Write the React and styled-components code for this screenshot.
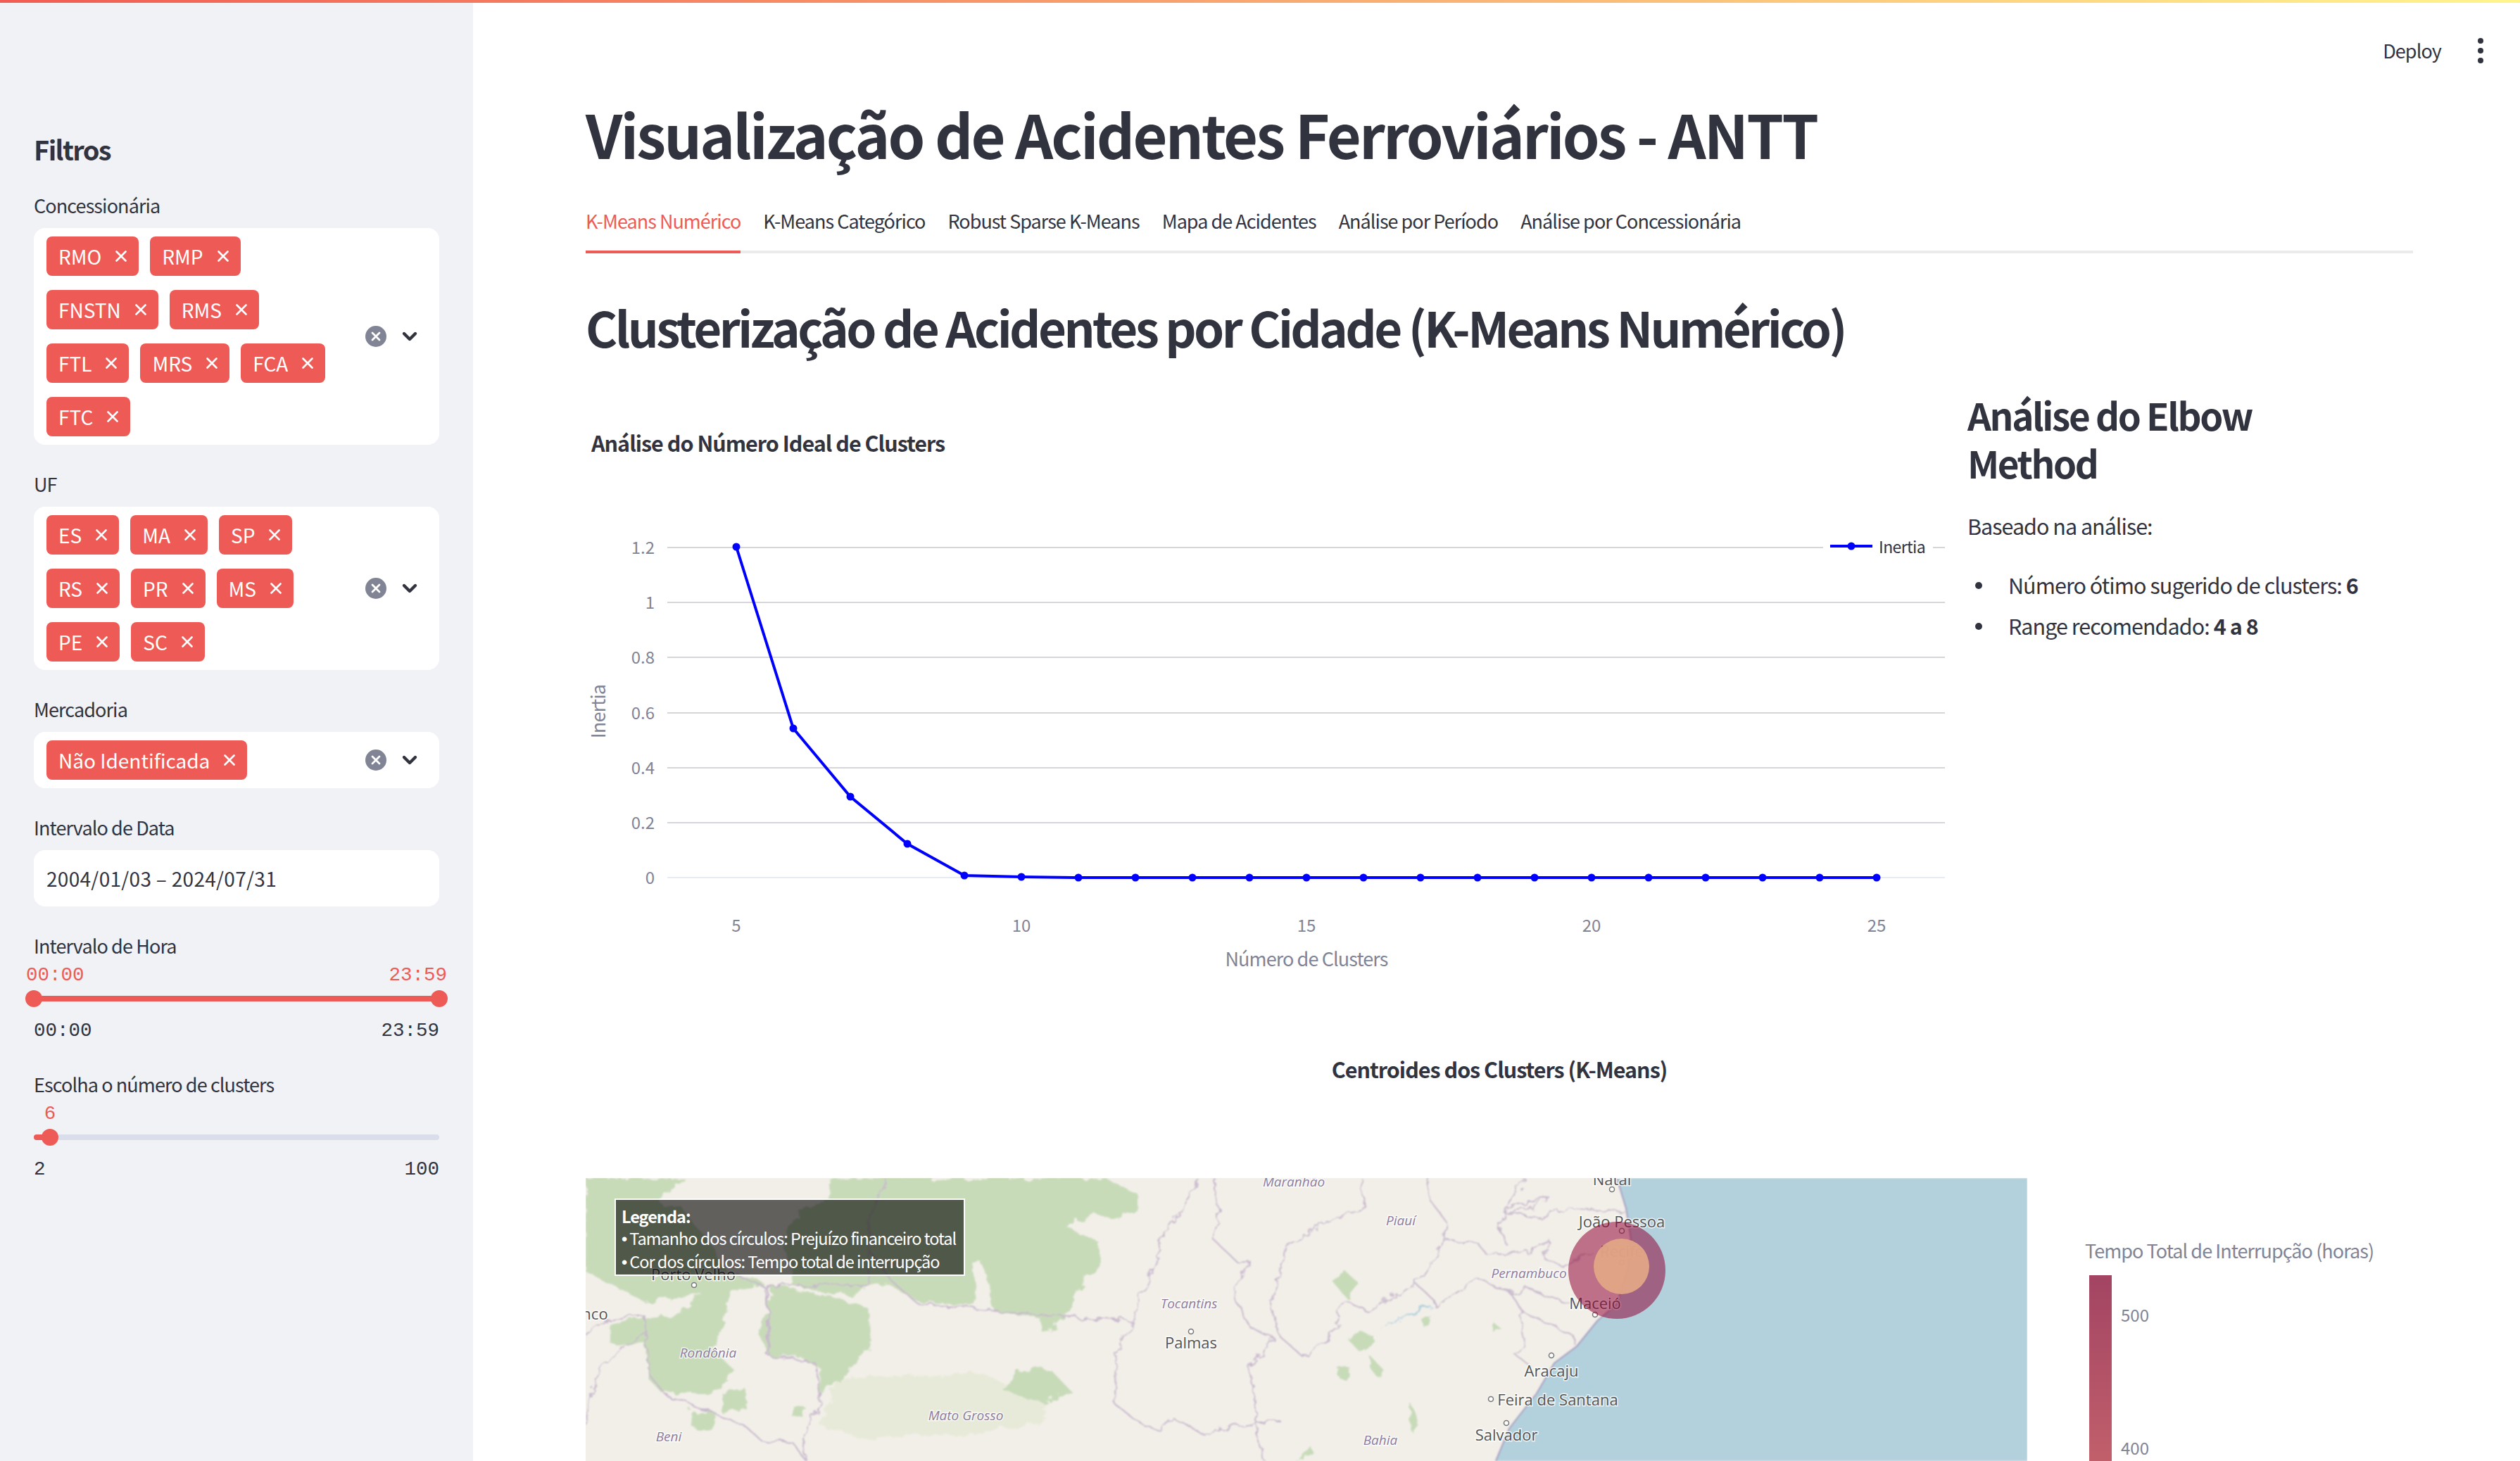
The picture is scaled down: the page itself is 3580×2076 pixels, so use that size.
import React from 'react';
import styled, { createGlobalStyle } from 'styled-components';

const SANS = '"Noto Sans CJK SC", "Noto Sans", sans-serif';
const MONO = '"Liberation Mono", monospace';
const RED = '#ee5b56';
const INK = '#31333f';
const MUTED = '#808495';

const GlobalStyle = createGlobalStyle`
  html, body { margin: 0; padding: 0; background: #fff; overflow: hidden; }
  * { box-sizing: border-box; }
  body { font-family: ${SANS}; color: ${INK}; }
`;

const Page = styled.div`
  position: relative;
  display: flex;
  width: 3580px;
  height: 2076px;
  overflow: hidden;
`;
const TopBar = styled.div`
  position: absolute;
  top: 0;
  left: 0;
  right: 0;
  height: 4px;
  background: linear-gradient(90deg, #f25c54, #fff48c);
  z-index: 3;
`;
const Toolbar = styled.div`
  position: absolute;
  top: 50px;
  right: 52px;
  display: flex;
  align-items: center;
  gap: 52px;
  font-size: 27px;
  line-height: 44px;
  letter-spacing: -0.9px;
`;
const Dots = styled.span`
  display: flex;
  flex-direction: column;
  gap: 6px;
  width: 8px;
  i { display: block; width: 8px; height: 8px; border-radius: 50%; background: ${INK}; }
`;

/* sidebar */
const Sidebar = styled.aside`
  flex: none;
  width: 672px;
  height: 100%;
  padding: 186px 48px 0;
  background: #f0f2f6;
  display: flex;
  flex-direction: column;
  gap: 32px;
`;
const SideTitle = styled.h2`
  margin: 0 0 -2px;
  font-size: 38px;
  line-height: 52px;
  font-weight: 600;
  letter-spacing: -1.6px;
`;
const Field = styled.div``;
const Label = styled.div`
  height: 56px;
  padding-bottom: 8px;
  font-size: 27px;
  line-height: 47px;
  letter-spacing: -0.9px;
`;
const SelectBox = styled.div`
  display: flex;
  align-items: center;
  width: 576px;
  padding: 12px 26px 12px 18px;
  background: #fff;
  border-radius: 16px;
`;
const Values = styled.div`
  flex: 1;
  display: flex;
  flex-wrap: wrap;
  gap: 20px 16px;
  padding-right: 33px;
`;
const Tag = styled.span`
  display: inline-flex;
  align-items: center;
  gap: 20px;
  height: 56px;
  padding: 0 17px;
  border-radius: 8px;
  background: ${RED};
  color: #fff;
  font-size: 28px;
  line-height: 52px;
`;
const Icons = styled.div`
  display: flex;
  align-items: center;
  gap: 17px;
`;
const DateBox = styled.div`
  width: 576px;
  height: 80px;
  padding: 0 18px;
  background: #fff;
  border-radius: 16px;
  font-size: 28px;
  line-height: 80px;
  letter-spacing: 0.3px;
`;
const SliderField = styled.div`
  padding-bottom: 4px;
`;
const SliderLabel = styled.div`
  height: 50px;
  font-size: 27px;
  line-height: 47px;
  letter-spacing: -0.9px;
`;
const ThumbValues = styled.div`
  display: flex;
  justify-content: space-between;
  margin: 0 -11px;
  height: 32px;
  font-family: ${MONO};
  font-size: 27.5px;
  line-height: 32px;
  color: ${RED};
`;
const SingleValue = styled.div`
  height: 32px;
  width: 46px;
  text-align: center;
  font-family: ${MONO};
  font-size: 27.5px;
  line-height: 32px;
  color: ${RED};
`;
const Rail = styled.div`
  position: relative;
  height: 8px;
  margin: 13px 0 26px;
  border-radius: 4px;
  background: #d9deea;
`;
const RailFill = styled.div`
  height: 8px;
  border-radius: 4px;
  background: ${RED};
  width: ${p => p.$to}px;
  margin-left: ${p => p.$from}px;
`;
const Thumb = styled.span`
  position: absolute;
  top: -8px;
  left: ${p => p.$at - 12}px;
  width: 24px;
  height: 24px;
  border-radius: 50%;
  background: ${RED};
`;
const TickRow = styled.div`
  display: flex;
  justify-content: space-between;
  font-family: ${MONO};
  font-size: 27.5px;
  line-height: 32px;
`;

/* main */
const Main = styled.main`
  flex: 1;
  min-width: 0;
  padding: 137px 152px 0 160px;
`;
const Title = styled.h1`
  margin: 0;
  font-size: 84.5px;
  line-height: 104px;
  font-weight: 700;
  letter-spacing: -2.85px;
  white-space: nowrap;
`;
const Tabs = styled.div`
  display: flex;
  gap: 32px;
  height: 119px;
  padding-top: 35px;
  border-bottom: 4px solid #ebebeb;
`;
const TabItem = styled.div`
  height: 80px;
  font-size: 27px;
  line-height: 76px;
  letter-spacing: -0.98px;
  color: ${p => (p.$active ? RED : INK)};
  border-bottom: ${p => (p.$active ? `4px solid ${RED}` : 'none')};
  box-sizing: content-box;
`;
const Heading = styled.h2`
  margin: 61px 0 0;
  font-size: 69px;
  line-height: 86px;
  font-weight: 600;
  letter-spacing: -3.6px;
  white-space: nowrap;
`;
const Columns = styled.div`
  display: flex;
  gap: 32px;
  margin-top: 50px;
`;
const ChartCol = styled.div`
  flex: none;
  width: 1931px;
`;
const ChartSvg = styled.svg`
  display: block;
  width: 1931px;
  height: 883px;
`;
const InfoCol = styled.div`
  flex: 1;
`;
const InfoTitle = styled.h3`
  margin: -2px 0 0;
  max-width: 520px;
  font-size: 53px;
  line-height: 68px;
  font-weight: 600;
  letter-spacing: -2.4px;
`;
const InfoText = styled.p`
  margin: 31px 0 0;
  font-size: 30.5px;
  line-height: 51px;
  letter-spacing: -1px;
`;
const InfoList = styled.ul`
  margin: 33px 0 0;
  padding: 0 0 0 58px;
  list-style: none;
  font-size: 30.5px;
  line-height: 51px;
  letter-spacing: -0.95px;
  li { position: relative; }
  li::before {
    content: '';
    position: absolute;
    left: -47px;
    top: 21px;
    width: 10px;
    height: 10px;
    border-radius: 50%;
    background: ${INK};
  }
  li + li { margin-top: 7px; }
  b { font-weight: 600; }
`;
const SectionTitle = styled.div`
  margin-top: 58px;
  text-align: center;
  font-size: 30.5px;
  line-height: 42px;
  font-weight: 700;
  letter-spacing: -1px;
`;
const MapRow = styled.div`
  display: flex;
  margin-top: 134px;
`;
const MapFrame = styled.div`
  position: relative;
  flex: none;
  width: 2048px;
  height: 402px;
  overflow: hidden;
`;
const MapSvg = styled.svg`
  display: block;
  width: 2048px;
  height: 402px;
`;
const MapLegend = styled.div`
  position: absolute;
  top: 29px;
  left: 41px;
  width: 498px;
  height: 110px;
  padding: 8px 0 0 8px;
  border: 2px solid #fff;
  background: rgba(0, 0, 0, 0.6);
  color: #fff;
  font-size: 23.5px;
  line-height: 31px;
  letter-spacing: -1px;
  white-space: nowrap;
  b { font-weight: 700; }
`;
const LegendDot = styled.span`
  font-family: "Liberation Sans", sans-serif;
  letter-spacing: 0;
  margin-right: 3px;
`;
const ColorScale = styled.div`
  padding: 83px 0 0 82px;
`;
const ScaleTitle = styled.div`
  font-size: 27px;
  line-height: 40px;
  letter-spacing: -0.95px;
  color: ${MUTED};
  white-space: nowrap;
`;
const ScaleBody = styled.div`
  display: flex;
  gap: 13px;
  margin: 15px 0 0 6px;
`;
const ScaleBar = styled.div`
  width: 32px;
  height: 300px;
  background: linear-gradient(#a34463, #c15f6b 264px);
`;
const ScaleTicks = styled.div`
  display: flex;
  flex-direction: column;
  gap: 157px;
  padding-top: 40px;
  font-size: 24px;
  line-height: 32px;
  color: ${MUTED};
`;

/* svg text */
const AxisText = styled.text`
  font-family: ${SANS};
  font-size: ${p => p.$size || 24}px;
  fill: ${p => p.$fill || MUTED};
  font-weight: ${p => p.$weight || 400};
  letter-spacing: ${p => p.$track || 0}px;
`;
const CityText = styled.text`
  font-family: "Open Sans", sans-serif;
  font-size: 22px;
  fill: #555;
  stroke: rgba(255, 255, 255, 0.75);
  stroke-width: 3px;
  paint-order: stroke;
  text-anchor: middle;
`;
const StateText = styled.text`
  font-family: "Open Sans", sans-serif;
  font-style: italic;
  font-size: 19px;
  fill: #8d7d9e;
  stroke: rgba(255, 255, 255, 0.7);
  stroke-width: 3px;
  paint-order: stroke;
  text-anchor: middle;
`;
const Rough = styled.g`
  filter: url(#rough);
`;
const Soft = styled.g`
  filter: blur(1px);
`;

const Cross = ({ size = 16, color = '#fff', width = 2.6 }) => (
  <svg width={size} height={size} viewBox="0 0 16 16">
    <path d="M1.5 1.5l13 13M14.5 1.5l-13 13" stroke={color} strokeWidth={width} strokeLinecap="round" fill="none" />
  </svg>
);

const ClearIcon = () => (
  <svg width="30" height="30" viewBox="0 0 30 30">
    <circle cx="15" cy="15" r="15" fill={MUTED} />
    <path d="M10 10l10 10M20 10l-10 10" stroke="#fff" strokeWidth="2.8" strokeLinecap="round" />
  </svg>
);

const Chevron = () => (
  <svg width="32" height="32" viewBox="0 0 32 32">
    <path d="M8 12l8 8 8-8" stroke={INK} strokeWidth="4.4" strokeLinecap="round" strokeLinejoin="round" fill="none" />
  </svg>
);

function MultiSelect({ items }) {
  return (
    <SelectBox>
      <Values>
        {items.map(item => (
          <Tag key={item}>{item}<Cross /></Tag>
        ))}
      </Values>
      <Icons>
        <ClearIcon />
        <Chevron />
      </Icons>
    </SelectBox>
  );
}

const yTicks = [['1.2', 778], ['1', 856], ['0.8', 934], ['0.6', 1013], ['0.4', 1091], ['0.2', 1169]];
const inertia = [777, 1035, 1132, 1199, 1244, 1246, 1247, 1247, 1247, 1247, 1247, 1247, 1247, 1247, 1247, 1247, 1247, 1247, 1247, 1247, 1247];
const points = inertia.map((y, i) => [1046 + i * 81, y]);

function ElbowChart() {
  return (
    <ChartSvg viewBox="832 557 1931 883">
      <AxisText x="840" y="642" $size={30.5} $fill={INK} $weight={700} $track={-1}>Análise do Número Ideal de Clusters</AxisText>
      {yTicks.map(([label, y]) => (
        <g key={label}>
          <line x1="948" x2="2763" y1={y} y2={y} stroke="#d6d6da" strokeWidth="2" />
          <AxisText x="930" y={y + 9} textAnchor="end">{label}</AxisText>
        </g>
      ))}
      <line x1="948" x2="2763" y1="1247" y2="1247" stroke="#e8ebf2" strokeWidth="2" />
      <AxisText x="930" y="1256" textAnchor="end">0</AxisText>
      {[5, 10, 15, 20, 25].map(n => (
        <AxisText key={n} x={1046 + (n - 5) * 81} y="1324" textAnchor="middle">{n}</AxisText>
      ))}
      <AxisText x="1856" y="1373" textAnchor="middle" $size={27} $track={-0.9}>Número de Clusters</AxisText>
      <AxisText x="860" y="1011" textAnchor="middle" $size={27} $track={-0.9} transform="rotate(-90 860 1011)">Inertia</AxisText>
      <polyline points={points.map(p => p.join(',')).join(' ')} fill="none" stroke="#0000ff" strokeWidth="4" />
      {points.map(([x, y]) => <circle key={x} cx={x} cy={y} r="5.5" fill="#0000ff" />)}
      <rect x="2590" y="756" width="156" height="44" fill="#fff" />
      <line x1="2600" x2="2660" y1="776" y2="776" stroke="#0000ff" strokeWidth="4" />
      <circle cx="2630" cy="776" r="5.5" fill="#0000ff" />
      <AxisText x="2669" y="786" $fill={INK} $size={23} $track={-0.6}>Inertia</AxisText>
    </ChartSvg>
  );
}

const greens = [
  '19,42 240,42 205,100 185,135 190,160 230,160 260,240 290,300 320,400 340,460 400,470 420,500 150,570 110,530 19,440',
  '560,42 1170,42 1250,110 1250,170 1205,220 1150,190 1090,250 1165,320 1165,400 1130,490 1100,560 1085,640 1040,710 1030,640 930,610 920,520 900,400 880,400 890,530 880,590 760,570 700,500 640,500 620,540 560,530 480,500 460,300 500,180 560,130',
  '150,640 75,670 75,750 150,745 160,900 190,960 300,960 350,860 300,770 330,640 340,510 300,510 260,560 220,630',
  '430,500 560,540 650,600 650,770 600,880 540,960 540,850 500,810 430,800 400,700 430,560',
  '990,860 1050,850 1100,950 1040,1000 1000,980 950,950',
  '320,960 370,930 380,1030 320,1040',
  '250,1030 310,1040 300,1120 260,1110',
  '480,1010 510,1020 500,1060 475,1050',
];
const borders = [
  '690,42 650,200 650,500 425,505 425,800 530,830 545,1000 500,1150 510,1248',
  '650,350 700,480 760,580 1000,620 1235,650',
  '1380,42 1380,90 1300,300 1290,400 1240,620 1200,800 1200,1010 1240,1070 1300,1120 1330,1070 1400,1140 1440,1110 1510,1080 1568,1080',
  '1420,42 1430,180 1410,290 1470,400 1500,400 1460,540 1500,680 1550,720 1500,850 1510,1000 1510,1080 1530,1248',
  '19,710 60,650 150,630 160,880 200,970 300,1040 380,1110 410,1160 480,1170 510,1248',
  '19,1100 40,900 100,760 150,700',
  '360,460 420,510 430,800',
];
const eastBorders = [
  '210,42 220,170 140,220 40,330 10,600 30,720 75,795 140,740 165,640 150,600 180,570 225,610 330,490 390,330 400,230 360,130 360,42',
  '390,300 470,320 490,370 570,360 630,310 620,390 660,420 720,350',
  '330,490 370,560 375,590 470,470 540,530 580,510 660,570 720,590',
  '540,530 570,610 570,760 550,790 590,850',
  '570,610 680,710 690,760',
  '575,42 530,170 520,270 530,320',
  '530,170 630,125 590,170 530,190 610,210 680,170 800,190',
];
const eastGreens = [
  '175,440 205,490 180,560 145,480',
  '200,680 240,720 210,790 180,730',
  '160,840 185,850 175,900 155,885',
  '230,800 260,860 245,890 225,840',
  '60,1248 100,1190 105,1215 60,1248',
  '320,1000 340,1100 325,1130 315,1060',
  '505,660 525,690 505,700',
  '340,640 370,640 350,680',
];
const cities = [
  ['Porto Velho', 985, 1819], ['Palmas', 1692, 1916], ['Natal', 2290, 1684], ['João Pessoa', 2304, 1744],
  ['Recife', 2304, 1786], ['Maceió', 2266, 1860], ['Aracaju', 2204, 1956], ['Feira de Santana', 2213, 1997], ['Salvador', 2140, 2047], ['nco', 845, 1875],
];
const cityDots = [[986, 1826], [1692, 1892], [2290, 1690], [2304, 1749], [2304, 1794], [2266, 1868], [2204, 1926], [2118, 1988], [2140, 2022]];
const states = [
  ['Rondônia', 1006, 1929], ['Tocantins', 1689, 1859], ['Mato Grosso', 1372, 2018], ['Beni', 950, 2048],
  ['Maranhão', 1838, 1686], ['Piauí', 1990, 1741], ['Pernambuco', 2172, 1816], ['Bahia', 1961, 2053],
];
const coast = '2297,1674 2310,1717 2317,1760 2313,1803 2297,1853 2269,1877 2240,1913 2208,1937 2183,1980 2157,2013 2144,2030 2125,2076';

function RailMap() {
  return (
    <MapSvg viewBox="832 1674 2048 402">
      <defs>
        <filter id="rough" x="0" y="0" width="100%" height="100%">
          <feTurbulence type="fractalNoise" baseFrequency="0.06" numOctaves="3" seed="4" />
          <feDisplacementMap in="SourceGraphic" scale="16" />
          <feGaussianBlur stdDeviation="0.9" />
        </filter>
      </defs>
      <rect x="832" y="1674" width="2048" height="402" fill="#f2efe9" />
      <Rough>
        <rect x="832" y="1674" width="2048" height="402" fill="none" />
        {/* west half traced on 1.568 x 3 crop grid */}
        <g transform="translate(820 1660) scale(0.6378 0.3333)">
          <polygon points="580,900 900,870 1040,1000 1040,1080 900,1130 640,1150 540,1100" fill="#e8ead9" />
          {greens.map(p => <polygon key={p} points={p} fill="#c8dbb9" />)}
          {borders.map(p => (
            <polyline key={p} points={p} fill="none" stroke="#c8b9cc" strokeWidth="2" vectorEffect="non-scaling-stroke" />
          ))}
        </g>
        <g transform="translate(1800 1660) scale(0.6378 0.3333)">
          {eastGreens.map(p => <polygon key={p} points={p} fill="#c8dbb9" />)}
          {eastBorders.map(p => (
            <polyline key={p} points={p} fill="none" stroke="#c8b9cc" strokeWidth="2" vectorEffect="non-scaling-stroke" />
          ))}
          <polygon points="250,690 340,590 370,590 300,640 262,680" fill="#b3d1dd" />
        </g>
      </Rough>
      <Soft>
        <polygon points={`${coast} 2880,2076 2880,1674`} fill="#b2d1dd" />
        <polyline points={coast} fill="none" stroke="#a99fc0" strokeWidth="2" />
      </Soft>
      {cityDots.map(([x, y]) => <circle key={x} cx={x} cy={y} r="3.5" fill="#fff" stroke="#777" strokeWidth="1.5" />)}
      {cities.map(([name, x, y]) => <CityText key={name} x={x} y={y}>{name}</CityText>)}
      {states.map(([name, x, y]) => <StateText key={name} x={x} y={y}>{name}</StateText>)}
      <circle cx="2297" cy="1805" r="69" fill="#8f0032" fillOpacity="0.53" />
      <circle cx="2303.5" cy="1799.5" r="39.5" fill="#e2a586" fillOpacity="0.95" />
    </MapSvg>
  );
}

const tabs = ['K-Means Numérico', 'K-Means Categórico', 'Robust Sparse K-Means', 'Mapa de Acidentes', 'Análise por Período', 'Análise por Concessionária'];

export default function App() {
  return (
    <Page>
      <GlobalStyle />
      <TopBar />
      <Toolbar>
        <span>Deploy</span>
        <Dots><i /><i /><i /></Dots>
      </Toolbar>
      <Sidebar>
        <SideTitle>Filtros</SideTitle>
        <Field>
          <Label>Concessionária</Label>
          <MultiSelect items={['RMO', 'RMP', 'FNSTN', 'RMS', 'FTL', 'MRS', 'FCA', 'FTC']} />
        </Field>
        <Field>
          <Label>UF</Label>
          <MultiSelect items={['ES', 'MA', 'SP', 'RS', 'PR', 'MS', 'PE', 'SC']} />
        </Field>
        <Field>
          <Label>Mercadoria</Label>
          <MultiSelect items={['Não Identificada']} />
        </Field>
        <Field>
          <Label>Intervalo de Data</Label>
          <DateBox>2004/01/03 – 2024/07/31</DateBox>
        </Field>
        <SliderField>
          <SliderLabel>Intervalo de Hora</SliderLabel>
          <ThumbValues><span>00:00</span><span>23:59</span></ThumbValues>
          <Rail>
            <RailFill $from={0} $to={576} />
            <Thumb $at={0} />
            <Thumb $at={576} />
          </Rail>
          <TickRow><span>00:00</span><span>23:59</span></TickRow>
        </SliderField>
        <SliderField>
          <SliderLabel>Escolha o número de clusters</SliderLabel>
          <SingleValue>6</SingleValue>
          <Rail>
            <RailFill $from={0} $to={23} />
            <Thumb $at={23} />
          </Rail>
          <TickRow><span>2</span><span>100</span></TickRow>
        </SliderField>
      </Sidebar>
      <Main>
        <Title>Visualização de Acidentes Ferroviários - ANTT</Title>
        <Tabs>
          {tabs.map((t, i) => <TabItem key={t} $active={i === 0}>{t}</TabItem>)}
        </Tabs>
        <Heading>Clusterização de Acidentes por Cidade (K-Means Numérico)</Heading>
        <Columns>
          <ChartCol>
            <ElbowChart />
          </ChartCol>
          <InfoCol>
            <InfoTitle>Análise do Elbow Method</InfoTitle>
            <InfoText>Baseado na análise:</InfoText>
            <InfoList>
              <li>Número ótimo sugerido de clusters: <b>6</b></li>
              <li>Range recomendado: <b>4 a 8</b></li>
            </InfoList>
          </InfoCol>
        </Columns>
        <SectionTitle>Centroides dos Clusters (K-Means)</SectionTitle>
        <MapRow>
          <MapFrame>
            <RailMap />
            <MapLegend>
              <b>Legenda:</b><br />
              <LegendDot>•</LegendDot>Tamanho dos círculos: Prejuízo financeiro total<br />
              <LegendDot>•</LegendDot>Cor dos círculos: Tempo total de interrupção
            </MapLegend>
          </MapFrame>
          <ColorScale>
            <ScaleTitle>Tempo Total de Interrupção (horas)</ScaleTitle>
            <ScaleBody>
              <ScaleBar />
              <ScaleTicks><span>500</span><span>400</span></ScaleTicks>
            </ScaleBody>
          </ColorScale>
        </MapRow>
      </Main>
    </Page>
  );
}
